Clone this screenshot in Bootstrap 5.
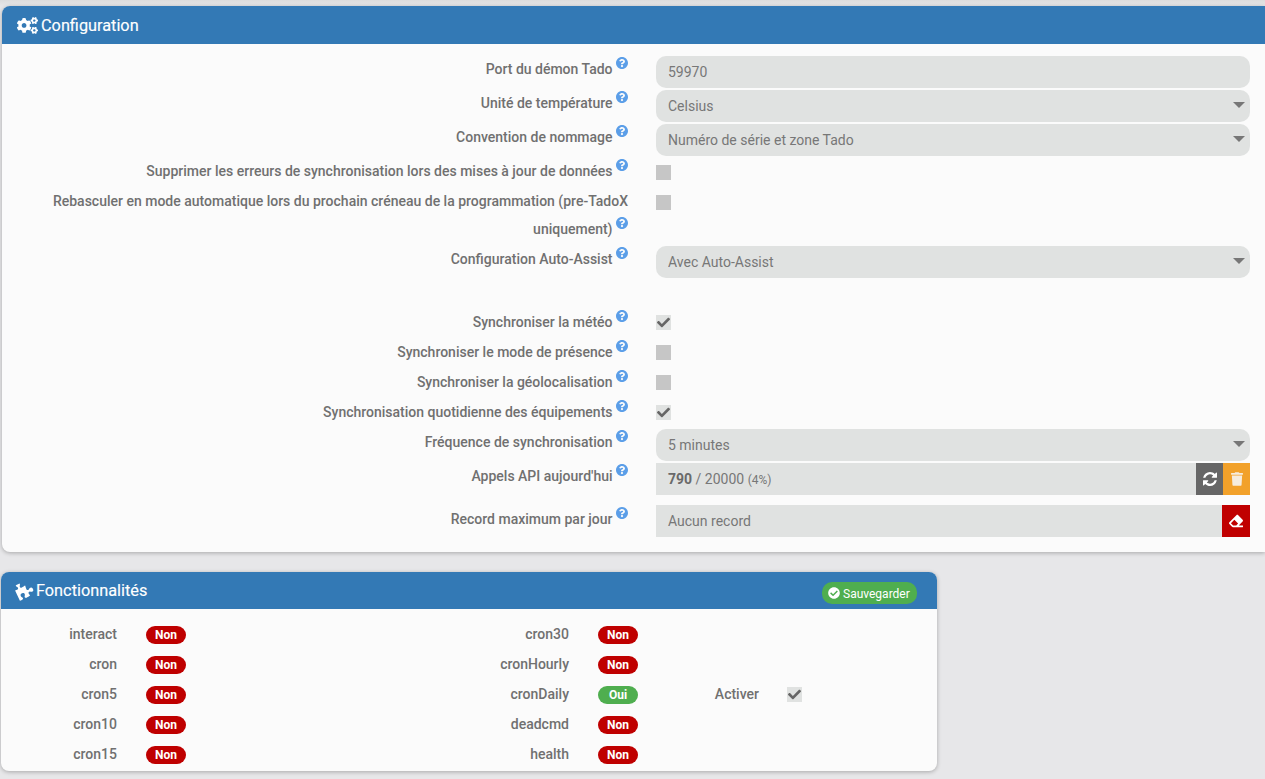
<!DOCTYPE html>
<html lang="fr">
<head>
<meta charset="utf-8">
<title>Configuration</title>
<link href="https://cdn.jsdelivr.net/npm/bootstrap@5.3.0/dist/css/bootstrap.min.css" rel="stylesheet">
<style>
html,body{height:100%}
body{background:#e7e7e9;font-family:Roboto,"Liberation Sans",sans-serif;font-size:14px;color:#666;overflow:hidden}
.top-shade{height:6px;background:linear-gradient(#dcdcdc,#e7e7e9)}
.panel-box{background:#fbfbfb;box-shadow:0 1px 4px rgba(0,0,0,.28)}
.panel-main{margin-left:2px;border-radius:8px 0 0 8px;height:546px}
.panel-feat{margin:20px 0 0 1px;width:936px;height:199px;border-radius:8px}
.panel-head{background:#3379b5;color:#fff;font-size:16.3px;font-weight:400;-webkit-text-stroke:.15px #fff;padding-left:15px;border-radius:8px 8px 0 0}
.panel-main .panel-head{height:38px;border-top-right-radius:0;padding-top:1px}
.panel-feat .panel-head{height:37px;padding-right:20px}
.head-ico{fill:#fff;display:block}
.title-text{padding-top:2px}
.title-gap{margin-right:3px}
.puzzle-tilt{transform:rotate(-25deg)}
.panel-form{padding-top:12px}
.frow{display:flex;height:34px}
.frow.h30{height:30px}
.frow.h58{height:58px}
.frow.h62{height:62px}
.frow.h42{height:42px}
.frow.h30b{height:31px}
.flabel{flex:0 0 626px;text-align:right;padding:0 0 0 15px;font-weight:500;line-height:28px;margin:-1px 0 0;color:#707070}
.flabel.low{margin-top:0}
.qmark{width:12px;height:12px;fill:#5b9ee8;vertical-align:5px}
.ffield{flex:0 0 594px;margin-left:28px}
.jinput.form-control,.jinput.form-select{height:32px;background-color:#e0e2e1;border:0;border-radius:10px;color:#777;font-size:14px;padding:0 30px 0 12px;box-shadow:none}
.jinput.form-select{background-image:url("data:image/svg+xml,%3Csvg xmlns='http://www.w3.org/2000/svg' viewBox='0 0 12 6'%3E%3Cpath d='M0 0h12L6 6z' fill='%23777'/%3E%3C/svg%3E");background-size:12px 6px;background-position:right 5px top 12px}
.jcheck.form-check-input{width:15px;height:15px;margin:7px 0 0;border:0;border-radius:0;background-color:#c6c6c6;box-shadow:none;display:block;float:none}
.jcheck.form-check-input:checked{background-color:#e0e2e1;background-size:13px 13px;background-image:url("data:image/svg+xml,%3Csvg xmlns='http://www.w3.org/2000/svg' viewBox='0 0 512 512'%3E%3Cpath fill='%23666' d='M173.9 439.4 7.5 273c-10-10-10-26.200 0-36.200l36.200-36.200c10-10 26.200-10 36.200 0L192 312.700 432.100 72.600c10-10 26.200-10 36.200 0l36.200 36.200c10 10 10 26.200 0 36.200L210.100 439.400c-10 10-26.200 10-36.200 0z'/%3E%3C/svg%3E")}
.jbox{display:flex;height:32px;width:100%}
.jshow{flex:1 1 auto;background:#e0e2e1;color:#777;padding:0 12px;line-height:33px}
.jshow b{font-weight:700;color:#6a6a6a}
.jshow small{font-size:12px}
.jbtn.btn{width:27px;height:32px;padding:0;border:0;border-radius:0;display:flex;align-items:center;justify-content:center}
.jbtn.wide{width:28px}
.jbtn svg{fill:#fff;display:block}
.jgrey.btn{background:#666}
.jorange.btn{background:#f2a12a}
.jorange.btn svg{fill:#f6ecdd}
.jred.btn{background:#c00000}
.save-pill{background:#4fae4f;color:#fff;height:22px;width:95px;border-radius:10px;font-size:12px;font-weight:400;-webkit-text-stroke:0;display:flex;align-items:center;gap:3px;padding-left:6px;margin-top:5px}
.save-pill svg{fill:#fff;display:block}
.save-txt{padding-top:1px}
.feat-body{padding-top:10px;display:flex;align-items:center}
.fcol1{flex:0 0 452px}
.fcol2{flex:0 0 248px}
.frow2{display:flex;align-items:center;height:30px}
.frow2 .fname{width:116px;text-align:right;font-weight:500;color:#707070;margin-right:29px}
.state-pill{width:40px;height:18px;border-radius:9px;color:#fff;font-size:12px;font-weight:700;text-align:center;line-height:18px;margin-top:1px}
.st-no{background:#bf0000}
.st-yes{background:#4fae4f}
.act-wrap{display:flex;align-items:center}
.act-label{width:58px;text-align:right;font-weight:500;color:#707070;margin-right:28px}
.act-wrap .jcheck.form-check-input{margin:1px 0 0}
</style>
</head>
<body>
<svg width="0" height="0" class="d-block position-absolute" aria-hidden="true">
  <symbol id="i-q" viewBox="8 8 496 496"><path d="M504 256c0 136.997-111.043 248-248 248S8 392.997 8 256C8 119.083 119.043 8 256 8s248 111.083 248 248zM262.655 90c-54.497 0-89.255 22.957-116.549 63.758-3.536 5.286-2.353 12.415 2.715 16.258l34.699 26.31c5.205 3.947 12.621 3.008 16.665-2.122 17.864-22.658 30.113-35.797 57.303-35.797 20.429 0 45.698 13.148 45.698 32.958 0 14.976-12.363 22.667-32.534 33.976C247.128 238.528 216 254.941 216 296v4c0 6.627 5.373 12 12 12h56c6.627 0 12-5.373 12-12v-1.333c0-28.462 83.186-29.647 83.186-106.667 0-58.002-60.165-102-116.531-102zM256 338c-25.365 0-46 20.635-46 46 0 25.364 20.635 46 46 46s46-20.636 46-46c0-25.365-20.635-46-46-46z"/></symbol>
</svg>

<div class="top-shade"></div>

<section class="panel-box panel-main">
  <div class="panel-head d-flex align-items-center">
    <svg class="head-ico title-gap" width="21" height="17" viewBox="0 0 640 512"><path d="M512.100 191l-8.200 14.300c-3 5.300-9.400 7.500-15.100 5.400-11.800-4.400-22.600-10.700-32.100-18.600-4.600-3.800-5.800-10.500-2.800-15.700l8.200-14.300c-6.900-8-12.300-17.300-15.900-27.400h-16.500c-6 0-11.200-4.300-12.200-10.300-2-12-2.100-24.600 0-37.100 1-6 6.200-10.400 12.200-10.400h16.500c3.600-10.100 9-19.400 15.900-27.400l-8.200-14.300c-3-5.200-1.900-11.900 2.800-15.700 9.500-7.900 20.400-14.200 32.100-18.600 5.700-2.100 12.100.1 15.100 5.400l8.200 14.300c10.500-1.900 21.200-1.900 31.700 0L552 6.300c3-5.300 9.400-7.500 15.100-5.400 11.800 4.400 22.600 10.700 32.100 18.600 4.600 3.800 5.800 10.500 2.800 15.700l-8.200 14.300c6.900 8 12.300 17.300 15.900 27.400h16.500c6 0 11.200 4.300 12.200 10.300 2 12 2.100 24.600 0 37.100-1 6-6.200 10.400-12.200 10.400h-16.500c-3.600 10.100-9 19.400-15.900 27.400l8.200 14.300c3 5.200 1.900 11.900-2.800 15.700-9.500 7.900-20.400 14.200-32.100 18.600-5.700 2.100-12.100-.1-15.100-5.400l-8.200-14.300c-10.400 1.900-21.200 1.900-31.700 0zm-10.500-58.800c38.500 29.600 82.400-14.300 52.800-52.800-38.500-29.700-82.400 14.300-52.800 52.800zM386.300 286.100l33.700 16.800c10.100 5.800 14.500 18.100 10.500 29.100-8.900 24.200-26.400 46.400-42.600 65.800-7.400 8.900-20.200 11.100-30.300 5.300l-29.100-16.800c-16 13.700-34.600 24.600-54.900 31.700v33.600c0 11.600-8.300 21.600-19.700 23.600-24.600 4.200-50.400 4.400-75.900 0-11.500-2-20-11.900-20-23.600V418c-20.300-7.200-38.900-18-54.900-31.700L74 403c-10 5.800-22.900 3.600-30.300-5.300-16.200-19.400-33.300-41.600-42.200-65.700-4-10.900.4-23.200 10.500-29.100l33.300-16.800c-3.900-20.900-3.900-42.400 0-63.400L12 205.800c-10.100-5.800-14.600-18.100-10.500-29 8.900-24.200 26-46.400 42.200-65.800 7.400-8.900 20.200-11.100 30.300-5.300l29.100 16.800c16-13.700 34.600-24.600 54.900-31.700V57.100c0-11.500 8.200-21.500 19.600-23.500 24.600-4.200 50.500-4.400 76-.1 11.500 2 20 11.900 20 23.600v33.600c20.300 7.200 38.900 18 54.900 31.700l29.100-16.800c10-5.800 22.900-3.600 30.300 5.300 16.200 19.400 33.200 41.600 42.100 65.800 4 10.900.1 23.200-10 29.100l-33.700 16.800c3.900 21 3.900 42.500 0 63.500zm-117.600 21.100c59.200-77-28.700-164.900-105.700-105.700-59.200 77 28.700 164.900 105.700 105.700zm243.400 182.700l-8.200 14.300c-3 5.300-9.400 7.500-15.100 5.400-11.800-4.400-22.600-10.700-32.100-18.600-4.600-3.800-5.800-10.500-2.800-15.700l8.200-14.300c-6.900-8-12.300-17.300-15.900-27.400h-16.500c-6 0-11.200-4.300-12.200-10.300-2-12-2.100-24.600 0-37.100 1-6 6.200-10.400 12.200-10.400h16.500c3.600-10.100 9-19.400 15.900-27.400l-8.200-14.300c-3-5.200-1.900-11.900 2.800-15.700 9.500-7.900 20.400-14.200 32.100-18.600 5.700-2.100 12.100.1 15.100 5.400l8.200 14.300c10.500-1.900 21.200-1.900 31.700 0l8.200-14.300c3-5.300 9.400-7.500 15.100-5.400 11.800 4.400 22.600 10.700 32.100 18.600 4.600 3.800 5.800 10.500 2.800 15.700l-8.200 14.300c6.900 8 12.300 17.300 15.900 27.400h16.500c6 0 11.200 4.300 12.200 10.300 2 12 2.100 24.600 0 37.100-1 6-6.200 10.400-12.200 10.400h-16.500c-3.600 10.100-9 19.400-15.900 27.400l8.200 14.300c3 5.200 1.900 11.900-2.800 15.700-9.500 7.900-20.400 14.200-32.100 18.600-5.700 2.100-12.100-.1-15.100-5.400l-8.200-14.300c-10.400 1.900-21.200 1.900-31.700 0zM501.600 431c38.500 29.600 82.400-14.300 52.800-52.800-38.500-29.600-82.400 14.300-52.800 52.800z"/></svg>
    <span class="title-text">Configuration</span>
  </div>
  <form class="panel-form">
    <div class="frow"><label class="flabel">Port du démon Tado <svg class="qmark"><use href="#i-q"/></svg></label><div class="ffield"><input class="form-control jinput" value="59970"></div></div>
    <div class="frow"><label class="flabel">Unité de température <svg class="qmark"><use href="#i-q"/></svg></label><div class="ffield"><select class="form-select jinput"><option>Celsius</option></select></div></div>
    <div class="frow"><label class="flabel">Convention de nommage <svg class="qmark"><use href="#i-q"/></svg></label><div class="ffield"><select class="form-select jinput"><option>Numéro de série et zone Tado</option></select></div></div>
    <div class="frow h30"><label class="flabel">Supprimer les erreurs de synchronisation lors des mises à jour de données <svg class="qmark"><use href="#i-q"/></svg></label><div class="ffield"><input type="checkbox" class="form-check-input jcheck"></div></div>
    <div class="frow h58"><label class="flabel">Rebasculer en mode automatique lors du prochain créneau de la programmation (pre-TadoX uniquement) <svg class="qmark"><use href="#i-q"/></svg></label><div class="ffield"><input type="checkbox" class="form-check-input jcheck"></div></div>
    <div class="frow h62"><label class="flabel">Configuration Auto-Assist <svg class="qmark"><use href="#i-q"/></svg></label><div class="ffield"><select class="form-select jinput"><option>Avec Auto-Assist</option></select></div></div>
    <div class="frow h30"><label class="flabel low">Synchroniser la météo <svg class="qmark"><use href="#i-q"/></svg></label><div class="ffield"><input type="checkbox" class="form-check-input jcheck" checked></div></div>
    <div class="frow h30"><label class="flabel low">Synchroniser le mode de présence <svg class="qmark"><use href="#i-q"/></svg></label><div class="ffield"><input type="checkbox" class="form-check-input jcheck"></div></div>
    <div class="frow h30"><label class="flabel low">Synchroniser la géolocalisation <svg class="qmark"><use href="#i-q"/></svg></label><div class="ffield"><input type="checkbox" class="form-check-input jcheck"></div></div>
    <div class="frow h30b"><label class="flabel low">Synchronisation quotidienne des équipements <svg class="qmark"><use href="#i-q"/></svg></label><div class="ffield"><input type="checkbox" class="form-check-input jcheck" checked></div></div>
    <div class="frow"><label class="flabel">Fréquence de synchronisation <svg class="qmark"><use href="#i-q"/></svg></label><div class="ffield"><select class="form-select jinput"><option>5 minutes</option></select></div></div>
    <div class="frow h42"><label class="flabel">Appels API aujourd'hui <svg class="qmark"><use href="#i-q"/></svg></label><div class="ffield"><div class="jbox"><div class="jshow"><b>790</b> / 20000 <small>(4%)</small></div>
      <button type="button" class="btn jbtn jgrey" aria-label="Actualiser"><svg width="14" height="14" viewBox="128 128 1536 1536"><path d="M1639 1056q0 5-1 7-64 268-268 434.500t-478 166.500q-146 0-282.500-55t-243.500-157l-129 129q-19 19-45 19t-45-19-19-45v-448q0-26 19-45t45-19h448q26 0 45 19t19 45-19 45l-137 137q71 66 161 102t187 36q134 0 250-65t186-179q11-17 53-117 8-23 30-23h192q13 0 22.500 9.500t9.500 22.500zm25-800v448q0 26-19 45t-45 19h-448q-26 0-45-19t-19-45 19-45l138-138q-148-137-349-137-134 0-250 65t-186 179q-11 17-53 117-8 23-30 23h-199q-13 0-22.500-9.500t-9.500-22.500v-7q65-268 270-434.500t480-166.500q146 0 284 55.500t245 156.500l130-129q19-19 45-19t45 19 19 45z"/></svg></button>
      <button type="button" class="btn jbtn jorange" aria-label="Supprimer"><svg width="12" height="14" viewBox="0 0 448 512"><path d="M432 32H312l-9.400-18.700A24 24 0 0 0 281.100 0H166.800a23.720 23.720 0 0 0-21.400 13.300L136 32H16A16 16 0 0 0 0 48v32a16 16 0 0 0 16 16h416a16 16 0 0 0 16-16V48a16 16 0 0 0-16-16zM53.200 467a48 48 0 0 0 47.900 45h245.800a48 48 0 0 0 47.900-45L416 128H32z"/></svg></button>
    </div></div></div>
    <div class="frow"><label class="flabel low">Record maximum par jour <svg class="qmark"><use href="#i-q"/></svg></label><div class="ffield"><div class="jbox"><div class="jshow">Aucun record</div>
      <button type="button" class="btn jbtn wide jred" aria-label="Effacer"><svg width="14" height="14" viewBox="0 0 512 512"><path d="M497.941 273.941c18.745-18.745 18.745-49.137 0-67.882l-160-160c-18.745-18.745-49.136-18.746-67.883 0l-256 256c-18.745 18.745-18.745 49.137 0 67.882l96 96A48.004 48.004 0 0 0 144 480h356c6.627 0 12-5.373 12-12v-40c0-6.627-5.373-12-12-12H355.883l142.058-142.059zm-302.627-62.627l137.373 137.373L265.373 416H150.628l-80-80 124.686-124.686z"/></svg></button>
    </div></div></div>
  </form>
</section>

<section class="panel-box panel-feat">
  <div class="panel-head d-flex align-items-center">
    <svg class="head-ico title-gap puzzle-tilt" width="17" height="17" viewBox="128 128 1536 1536"><path d="M1664 1098q0 81-44.500 135t-123.500 54q-41 0-77.500-17.500t-59-38-56.500-38-71-17.500q-110 0-110 124 0 39 16 115t15 115v5q-22 0-33 1-34 3-97.500 11.500t-115.500 13.500-98 5q-61 0-103-26.500t-42-83.500q0-37 17.500-71t38-56.500 38-59 17.500-77.500q0-79-54-123.500t-135-44.500q-84 0-143 45.500t-59 127.500q0 43 15 83t33.500 64.500 33.500 53 15 50.500q0 45-46 89-37 35-117 35-95 0-245-24-9-2-27.500-4t-27.500-4l-13-2q-2 0-4.500-1t-3.500-1q-1 0-4 .5t-5 .5v-1024q2 1 17.500 3.500t34 5 21.500 3.500q150 24 245 24 80 0 117-35 46-44 46-89 0-22-15-50.500t-33.500-53-33.500-64.500-15-83q0-82 59-127.500t144-45.500q80 0 134 44.500t54 123.500q0 41-17.500 77.500t-38 59-38 56.500-17.500 71q0 57 42 83.500t103 26.500q64 0 180-15t163-17v2q-1 2-3.500 17.500t-5 34-3.500 21.500q-24 150-24 245 0 80 35 117 44 46 89 46 22 0 50.500-15t53-33.500 64.500-33.500 83-15q82 0 127.500 59t45.500 143z"/></svg>
    <span class="title-text">Fonctionnalités</span>
    <a class="save-pill ms-auto text-decoration-none" href="#"><svg width="12" height="12" viewBox="0 0 512 512"><path d="M504 256c0 136.967-111.033 248-248 248S8 392.967 8 256 119.033 8 256 8s248 111.033 248 248zM227.314 387.314l184-184c6.248-6.248 6.248-16.379 0-22.627l-22.627-22.627c-6.248-6.249-16.379-6.249-22.628 0L216 308.118l-70.059-70.059c-6.248-6.248-16.379-6.248-22.628 0l-22.627 22.627c-6.248 6.248-6.248 16.379 0 22.627l104 104c6.249 6.250 16.379 6.250 22.628.001z"/></svg><span class="save-txt">Sauvegarder</span></a>
  </div>
  <div class="feat-body">
    <div class="fcol1">
      <div class="frow2"><span class="fname">interact</span><span class="state-pill st-no">Non</span></div>
      <div class="frow2"><span class="fname">cron</span><span class="state-pill st-no">Non</span></div>
      <div class="frow2"><span class="fname">cron5</span><span class="state-pill st-no">Non</span></div>
      <div class="frow2"><span class="fname">cron10</span><span class="state-pill st-no">Non</span></div>
      <div class="frow2"><span class="fname">cron15</span><span class="state-pill st-no">Non</span></div>
    </div>
    <div class="fcol2">
      <div class="frow2"><span class="fname">cron30</span><span class="state-pill st-no">Non</span></div>
      <div class="frow2"><span class="fname">cronHourly</span><span class="state-pill st-no">Non</span></div>
      <div class="frow2"><span class="fname">cronDaily</span><span class="state-pill st-yes">Oui</span></div>
      <div class="frow2"><span class="fname">deadcmd</span><span class="state-pill st-no">Non</span></div>
      <div class="frow2"><span class="fname">health</span><span class="state-pill st-no">Non</span></div>
    </div>
    <div class="act-wrap"><span class="act-label">Activer</span><input type="checkbox" class="form-check-input jcheck" checked></div>
  </div>
</section>
<script src="https://cdn.jsdelivr.net/npm/bootstrap@5.3.0/dist/js/bootstrap.bundle.min.js"></script>
</body>
</html>
